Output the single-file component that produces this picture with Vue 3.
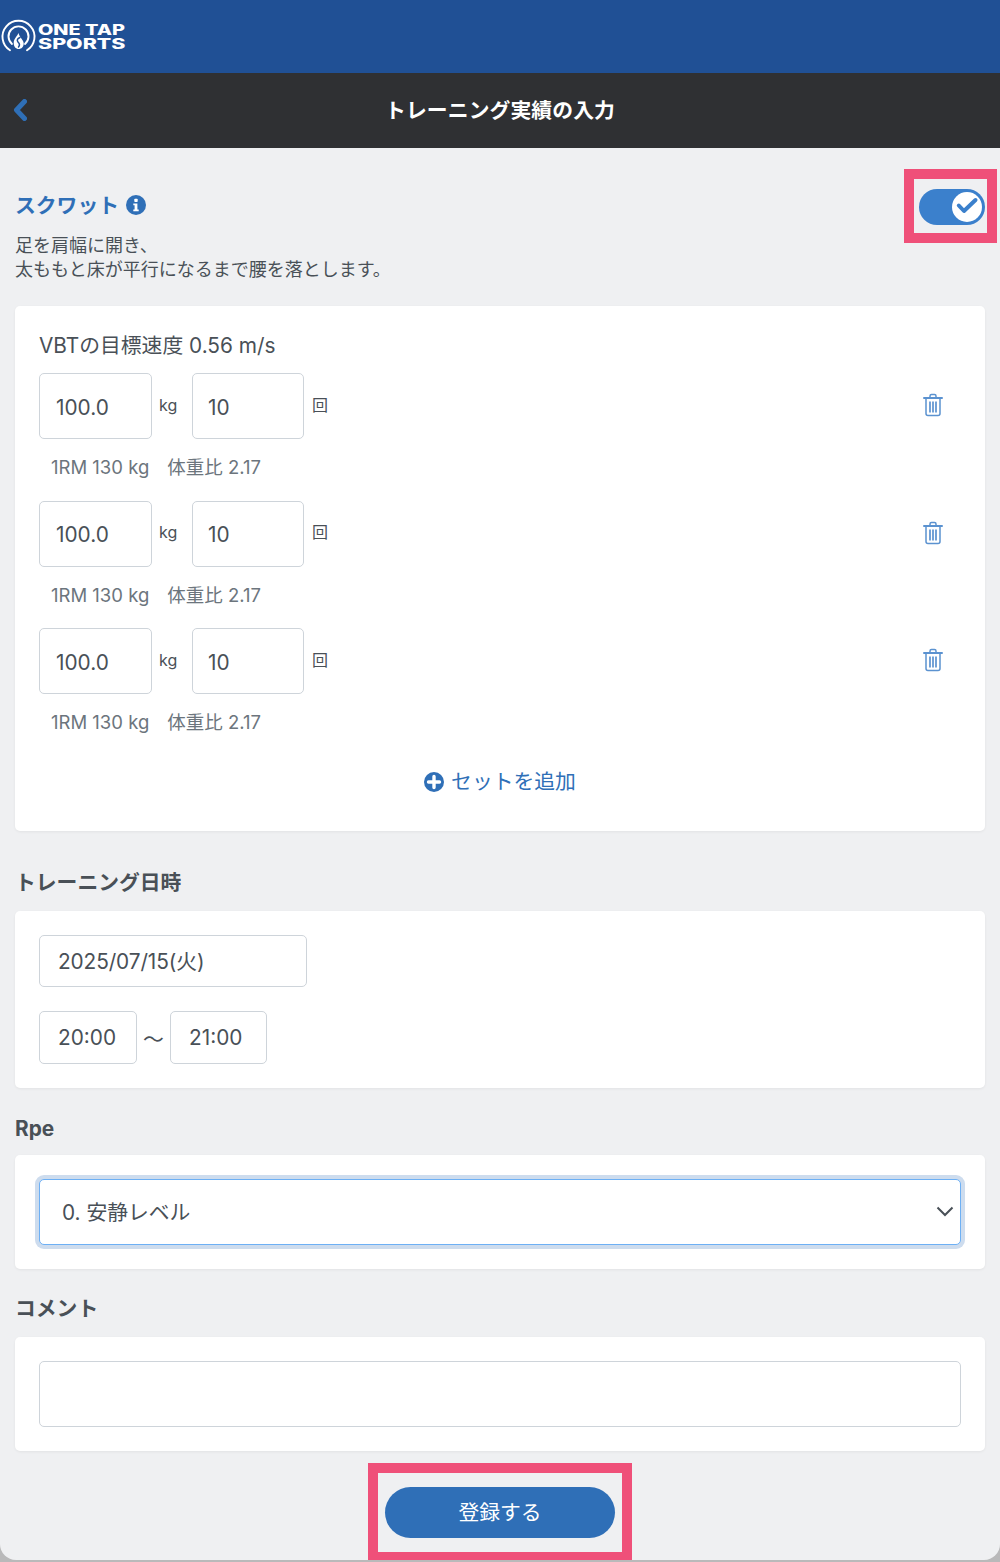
<script setup>
const sets = [
  { weight: '100.0', reps: '10' },
  { weight: '100.0', reps: '10' },
  { weight: '100.0', reps: '10' },
]
</script>

<template>
  <div class="page">
    <header class="brand">
      <svg class="logo-mark" width="38" height="38" viewBox="0 0 38 38" fill="none" stroke="#fff" stroke-linecap="round">
        <path d="M10 32.300A16 16 0 1 1 27 32.300" stroke-width="1.900" />
        <path d="M12 26A10 10 0 1 1 25 26" stroke-width="1.900" />
        <path d="M18.500 15c-1 3-4.800 5.500-4.800 10 0 3.800 2.200 6 5 6s5-2.200 5-5.500c0-3.500-4-5.500-5.200-10.500z" fill="#fff" stroke="none" />
        <path d="M20 19.500c-2.500 1-3.500 2.500-2 4.500 1.500 1.500 2.500 2.800.5 5" stroke="#205095" stroke-width="1.500" />
      </svg>
      <div class="logo-text">
        <span class="logo-line logo-line-one">ONE TAP</span>
        <span class="logo-line logo-line-two">SPORTS</span>
      </div>
    </header>

    <nav class="titlebar">
      <svg class="back" width="14" height="22" viewBox="0 0 14 22" fill="none">
        <path d="M11.500 2.500 3.500 11l8 8.500" stroke="#2f6fb7" stroke-width="5" stroke-linecap="round" stroke-linejoin="round" />
      </svg>
      <h1>トレーニング実績の入力</h1>
    </nav>

    <main class="content">
      <section class="exercise">
        <div class="exercise-head">
          <div class="exercise-name">
            <span>スクワット</span>
            <svg class="info" width="20" height="20" viewBox="0 0 20 20">
              <circle cx="10" cy="10" r="10" fill="#2f6fb7" />
              <rect x="8.300" y="3.800" width="3.400" height="3.200" rx=".8" fill="#fff" />
              <path d="M7.300 8.500h4.100v6h1.300v1.800H7.300v-1.800h1.300v-4.200H7.300z" fill="#fff" />
            </svg>
          </div>
          <div class="toggle">
            <span class="knob">
              <svg width="26" height="26" viewBox="0 0 26 26" fill="none">
                <path d="M4.800 11.500 10 17 21.500 6" stroke="#3b80cc" stroke-width="4" stroke-linecap="round" stroke-linejoin="round" />
              </svg>
            </span>
          </div>
          <div class="mark mark-toggle"></div>
        </div>
        <p class="exercise-desc">足を肩幅に開き、<br />太ももと床が平行になるまで腰を落とします。</p>
      </section>

      <section class="card card-sets">
        <div class="vbt">VBTの目標速度 0.56 m/s</div>
        <div v-for="(s, i) in sets" :key="i" class="set">
          <div class="set-row">
            <input class="field field-num" :value="s.weight" readonly />
            <span class="unit unit-kg">kg</span>
            <input class="field field-num field-reps" :value="s.reps" readonly />
            <span class="unit unit-rep">回</span>
            <svg class="trash" width="20" height="24" viewBox="0 0 20 24" fill="none" stroke="#5b92d0" stroke-width="1.500">
              <path d="M1 5h18" stroke-width="2" stroke-linecap="round" />
              <path d="M7 4.500V3a1.500 1.500 0 0 1 1.500-1.500h3A1.500 1.500 0 0 1 13 3v1.500" />
              <path d="M3 5.500V20.500A2 2 0 0 0 5 22.500H15A2 2 0 0 0 17 20.500V5.500" />
              <path d="M7 8.500v11M10 8.500v11M13 8.500v11" stroke-width="1.700" />
            </svg>
          </div>
          <div class="set-hint"><span>1RM 130 kg</span><span>体重比 2.17</span></div>
        </div>
        <div class="add-set">
          <svg width="20" height="20" viewBox="0 0 20 20">
            <circle cx="10" cy="10" r="10" fill="#2f6fb7" />
            <path d="M10 4.500v11M4.500 10h11" stroke="#fff" stroke-width="3.400" stroke-linecap="round" />
          </svg>
          <span>セットを追加</span>
        </div>
      </section>

      <h2 class="label label-date">トレーニング日時</h2>
      <section class="card card-date">
        <input class="field field-date" value="2025/07/15(火)" readonly />
        <div class="time-row">
          <input class="field field-time" value="20:00" readonly />
          <span class="tilde">〜</span>
          <input class="field field-time field-time-end" value="21:00" readonly />
        </div>
      </section>

      <h2 class="label label-rpe">Rpe</h2>
      <section class="card card-single">
        <div class="select-wrap">
          <select class="select">
            <option>0. 安静レベル</option>
          </select>
          <svg class="chevron" width="18" height="11" viewBox="0 0 18 11" fill="none">
            <path d="M1.500 1.500 9 9l7.500-7.500" stroke="#495057" stroke-width="2" />
          </svg>
        </div>
      </section>

      <h2 class="label label-comment">コメント</h2>
      <section class="card card-single">
        <textarea class="comment"></textarea>
      </section>

      <div class="submit-row">
        <button class="submit" type="button">登録する</button>
        <div class="mark mark-submit"></div>
      </div>
    </main>
  </div>
</template>

<style>
html, body {
  margin: 0;
  background: #b9b9ba;
}
</style>

<style scoped>
.page {
  width: 1000px;
  height: 1560px;
  overflow: hidden;
  background: #eff0f2;
  border-radius: 0 0 16px 16px;
  color: #495057;
  font-family: Inter, "Noto Sans CJK JP", sans-serif;
  font-size: 20.800px;
}
.brand {
  height: 73px;
  box-sizing: border-box;
  background: #205095;
  display: flex;
  align-items: center;
}
.logo-text {
  display: flex;
  flex-direction: column;
  color: #fff;
  font-weight: 800;
  font-size: 14px;
  line-height: 14px;
  white-space: nowrap;
}
.logo-line {
  transform-origin: left center;
}
.logo-line-one {
  transform: scaleX(1.42);
}
.logo-line-two {
  transform: scaleX(1.53);
}
.titlebar {
  height: 75px;
  background: #2f3033;
  position: relative;
  display: flex;
  align-items: center;
  justify-content: center;
}
.titlebar h1 {
  margin: -4px 0 0;
  color: #fff;
  font-size: 20.800px;
  font-weight: 700;
  letter-spacing: .1px;
}
.back {
  position: absolute;
  left: 13px;
  top: 26px;
}
.content {
  padding: 0 15px;
}
.exercise-head {
  display: flex;
  align-items: center;
  justify-content: space-between;
  position: relative;
  height: 36px;
  margin-top: 38px;
}
.exercise-name {
  display: flex;
  align-items: center;
  gap: 7px;
  color: #2f6fb7;
  font-weight: 700;
  font-size: 20.800px;
}
.info {
  margin-top: 1px;
}
.toggle {
  width: 66px;
  height: 36px;
  margin-top: 6px;
  border-radius: 18px;
  background: #3b80cc;
  position: relative;
}
.knob {
  position: absolute;
  right: 3px;
  top: 3px;
  width: 30px;
  height: 30px;
  border-radius: 50%;
  background: #fff;
  display: flex;
  align-items: center;
  justify-content: center;
}
.mark {
  position: absolute;
  box-sizing: border-box;
  border: 10px solid #ef5079;
  pointer-events: none;
}
.mark-toggle {
  right: -12px;
  top: -17px;
  width: 93px;
  height: 74px;
}
.exercise-desc {
  margin: 12px 0 0;
  font-size: 18px;
  line-height: 24px;
}
.card {
  background: #fff;
  border-radius: 5px;
  box-shadow: 0 1px 3px rgba(0, 0, 0, .06);
  padding: 24px;
}
.card-sets {
  margin-top: 24px;
  height: 525px;
  box-sizing: border-box;
}
.vbt {
  line-height: 31px;
  margin-bottom: 12px;
}
.set {
  height: 127.500px;
}
.set-row {
  display: flex;
  align-items: center;
  height: 66px;
}
.field {
  box-sizing: border-box;
  border: 1px solid #ced4da;
  border-radius: 5px;
  background: #fff;
  color: #495057;
  font: inherit;
  outline: none;
  display: block;
  margin: 0;
}
.field-num {
  width: 113px;
  height: 66px;
  padding: 2px 16px 0;
}
.field-reps {
  width: 112px;
  padding-left: 15px;
}
.unit {
  font-size: 16px;
  margin-top: -3px;
}
.unit-kg {
  width: 40px;
  padding-left: 7px;
  box-sizing: border-box;
}
.unit-rep {
  margin-left: 8px;
  margin-top: -5px;
}
.trash {
  margin-left: auto;
  margin-right: 18px;
  margin-top: -2px;
}
.set-hint {
  display: flex;
  gap: 18px;
  margin: 15px 0 0 12px;
  font-size: 18.500px;
  line-height: 26px;
  color: #6c757d;
}
.add-set {
  display: flex;
  align-items: center;
  justify-content: center;
  gap: 7px;
  color: #2f6fb7;
  margin-top: 10px;
  line-height: 32px;
}
.label {
  margin: 0;
  font-size: 20.800px;
  font-weight: 700;
}
.label-date {
  margin-top: 37px;
  line-height: 30px;
  margin-bottom: 13px;
}
.card-date {
  height: 177px;
  box-sizing: border-box;
}
.field-date {
  width: 268px;
  height: 52px;
  padding: 0 18px 2px;
  letter-spacing: -.1px;
}
.time-row {
  display: flex;
  align-items: center;
  margin-top: 24px;
}
.field-time {
  width: 98px;
  height: 53px;
  padding: 0 18px;
}
.field-time-end {
  width: 97px;
}
.tilde {
  width: 33px;
  text-align: center;
}
.label-rpe {
  margin-top: 26px;
  line-height: 30px;
  margin-bottom: 11px;
}
.card-single {
  height: 114px;
  box-sizing: border-box;
}
.select-wrap {
  position: relative;
  height: 66px;
}
.select {
  appearance: none;
  width: 100%;
  height: 66px;
  box-sizing: border-box;
  border: 1px solid #6db0f5;
  border-radius: 5px;
  box-shadow: 0 0 0 4px #cddcee;
  background: #fff;
  color: #495057;
  font: inherit;
  padding: 0 22px;
  outline: none;
}
.chevron {
  position: absolute;
  right: 7px;
  top: 27px;
}
.label-comment {
  margin-top: 25px;
  line-height: 30px;
  margin-bottom: 13px;
}
.comment {
  display: block;
  width: 100%;
  height: 66px;
  box-sizing: border-box;
  border: 1px solid #ced4da;
  border-radius: 5px;
  resize: none;
  outline: none;
  background: #fff;
}
.submit-row {
  display: flex;
  justify-content: center;
  margin-top: 36px;
  position: relative;
}
.submit {
  width: 230px;
  height: 51px;
  border: 0;
  border-radius: 26px;
  background: #2f6fb7;
  color: #fff;
  font: inherit;
  padding: 0 0 4px;
}
.mark-submit {
  left: 353px;
  top: -24px;
  width: 264px;
  height: 99px;
}
</style>
